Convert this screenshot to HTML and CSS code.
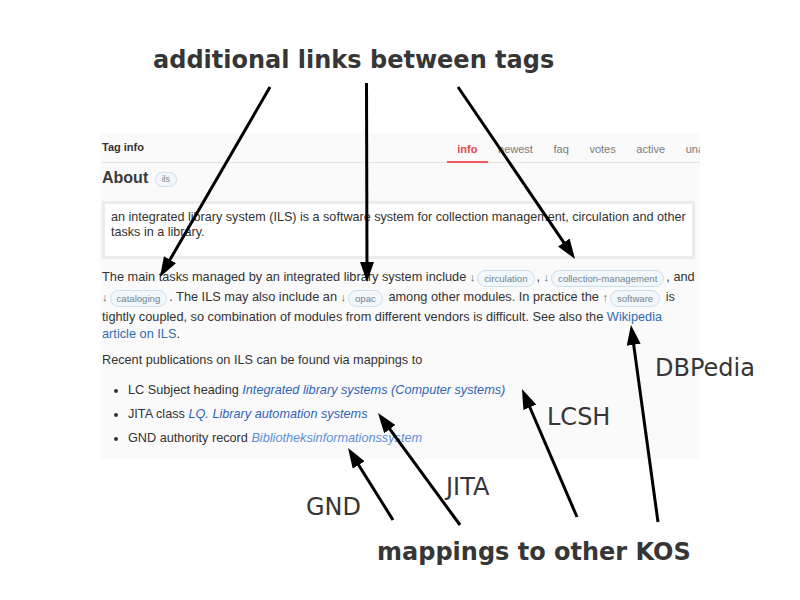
FILE: index.html
```html
<!DOCTYPE html>
<html lang="en">
<head>
<meta charset="utf-8">
<title>Tag info – ils</title>
<link rel="stylesheet" href="styles.css">
</head>
<body>
<div class="stage">
  <section class="panel">
    <header class="panel-head">
      <h2 class="panel-title">Tag info</h2>
      <nav class="tabs">
        <a class="tab active">info</a>
        <a class="tab">newest</a>
        <a class="tab">faq</a>
        <a class="tab">votes</a>
        <a class="tab">active</a>
        <a class="tab">unanswered</a>
      </nav>
    </header>
    <h1 class="about">About <span class="tag tag-sm">ils</span></h1>
    <div class="excerpt">
      <p>an integrated library system (ILS) is a software system for collection management, circulation and other tasks in a library.</p>
    </div>
    <p class="desc">The main tasks managed by an integrated library system include <span class="ref"><span class="dir">↓</span><span class="tag">circulation</span></span>, <span class="ref"><span class="dir">↓</span><span class="tag">collection-management</span></span>, and <span class="ref"><span class="dir">↓</span><span class="tag">cataloging</span></span>. The ILS may also include an <span class="ref"><span class="dir">↓</span><span class="tag">opac</span></span> among other modules. In practice the <span class="ref"><span class="dir">↑</span><span class="tag">software</span></span> is tightly coupled, so combination of modules from different vendors is difficult. See also the <a class="link">Wikipedia article on ILS</a>.</p>
    <p class="recent">Recent publications on ILS can be found via mappings to</p>
    <ul class="mappings">
      <li>LC Subject heading <a class="map-link">Integrated library systems (Computer systems)</a></li>
      <li>JITA class <a class="map-link">LQ. Library automation systems</a></li>
      <li>GND authority record <a class="map-link visited">Bibliotheksinformationssystem</a></li>
    </ul>
  </section>

  <svg class="overlay" width="800" height="600" viewBox="0 0 800 600">
    <defs>
      <marker id="ah" viewBox="0 0 20 14" markerWidth="20" markerHeight="14" markerUnits="userSpaceOnUse" refX="8" refY="7" orient="auto">
        <path d="M0,0 L20,7 L0,14 z" fill="#000"/>
      </marker>
    </defs>
    <g stroke="#000" stroke-width="3" marker-end="url(#ah)">
      <line x1="270" y1="87" x2="166" y2="266.6"/>
      <line x1="366.5" y1="83" x2="367" y2="270"/>
      <line x1="458" y1="87" x2="568.3" y2="249.1"/>
      <line x1="658" y1="522" x2="632.6" y2="336.9"/>
      <line x1="577" y1="517" x2="526.7" y2="400"/>
      <line x1="460" y1="525" x2="385.1" y2="422.7"/>
      <line x1="393" y1="520" x2="354.4" y2="458.2"/>
    </g>
    <g class="notes">
      <text class="note-bold" x="153" y="68">additional links between tags</text>
      <text class="note-bold" x="377" y="560">mappings to other KOS</text>
      <text class="note" x="306" y="515">GND</text>
      <text class="note" x="446" y="495">JITA</text>
      <text class="note" x="547" y="425">LCSH</text>
      <text class="note" x="655" y="376">DBPedia</text>
    </g>
  </svg>
</div>
</body>
</html>
```

FILE: styles.css
```css
html, body {
  margin: 0;
  padding: 0;
  background: #ffffff;
}

body {
  font-family: "Liberation Sans", Arial, sans-serif;
  color: #333333;
}

.stage {
  position: relative;
  width: 800px;
  height: 600px;
  overflow: hidden;
  padding: 133px 0 0 100px;
  box-sizing: border-box;
}

.panel {
  width: 600px;
  box-sizing: border-box;
  background: #fafafa;
  padding: 0 0 6px 2px;
  overflow: hidden;
}

.panel-head {
  display: grid;
  grid-template-columns: 345px 1fr;
  align-items: end;
  height: 29px;
  border-bottom: 1px solid #e4e4e4;
}

.panel-title {
  margin: 0;
  padding-bottom: 8px;
  font-size: 11px;
  line-height: 13px;
  font-weight: bold;
  color: #333333;
}

.tabs {
  display: flex;
  white-space: nowrap;
  overflow: hidden;
  margin-bottom: -1px;
}

.tab {
  flex: 0 0 auto;
  padding: 0 10.3px 5px;
  font-size: 11px;
  line-height: 13px;
  color: #7a7a7a;
  border-bottom: 2px solid transparent;
}

.tab.active {
  color: #e4474c;
  font-weight: bold;
  border-bottom-color: #ef5a5f;
}

.about {
  margin: 5px 0 0;
  font-size: 16px;
  line-height: 20px;
  font-weight: bold;
  color: #3a3a3a;
}

.ref {
  white-space: nowrap;
}

.tag {
  display: inline-block;
  box-sizing: border-box;
  height: 17px;
  padding: 0 6px;
  margin: 1.5px 2px 1.5px 2px;
  border: 1px solid #cddfe9;
  border-radius: 9px;
  background: #f1f7fa;
  color: #6f8494;
  font-size: 9.6px;
  line-height: 15px;
  font-weight: normal;
  vertical-align: middle;
}

.tag-sm {
  height: 15px;
  padding: 0 6px;
  margin: 0 0 0 2px;
  font-size: 8.6px;
  line-height: 13px;
  vertical-align: 1px;
}

.excerpt {
  margin-top: 13px;
  width: 593px;
  box-sizing: border-box;
  border: 3px solid #ececec;
  background: #ffffff;
  padding: 5.5px 6px 16.5px;
}

.excerpt p {
  margin: 0;
  font-size: 12.6px;
  line-height: 15px;
}

.desc {
  width: 593px;
  margin: 9px 0 0;
  font-size: 12.75px;
  line-height: 17px;
}

.dir {
  font-size: 11px;
  color: #666666;
}

.link {
  color: #2f6db5;
}

.recent {
  margin: 9.5px 0 0;
  font-size: 12.7px;
  line-height: 17px;
}

.mappings {
  margin: 13.5px 0 0;
  padding-left: 26px;
  font-size: 12.7px;
  line-height: 17px;
}

.mappings li {
  margin-bottom: 6.8px;
}

.map-link {
  font-style: italic;
  color: #2e64b6;
}

.map-link.visited {
  color: #5b8fd9;
}

.overlay {
  position: absolute;
  left: 0;
  top: 0;
  pointer-events: none;
}

.note,
.note-bold {
  font-family: "DejaVu Sans", sans-serif;
  font-size: 24px;
  fill: #363636;
}

.note-bold {
  font-weight: bold;
}
```
